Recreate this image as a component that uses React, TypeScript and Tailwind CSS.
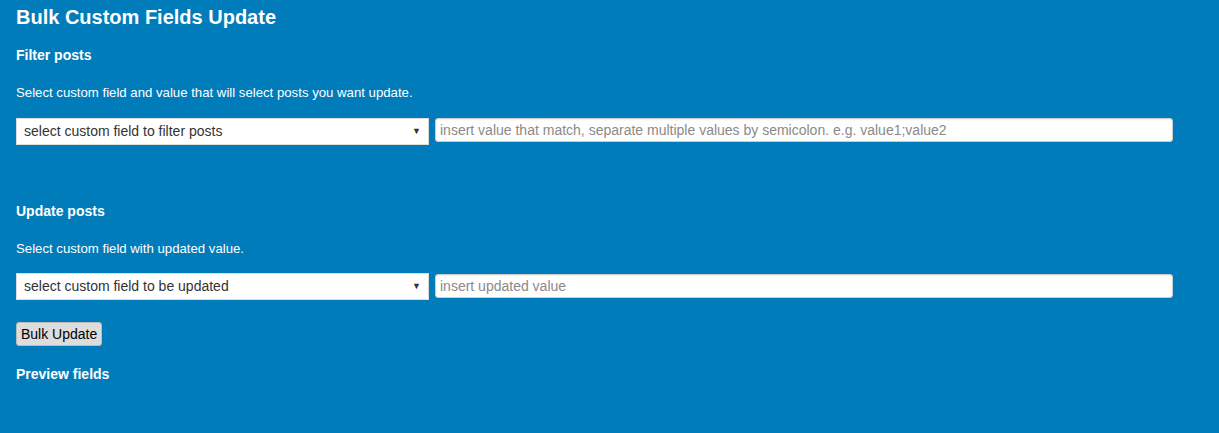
import React from "react"

function FieldSelect({ label }: { label: string }) {
  return (
    <div className="relative w-[413px] h-[27px] shrink-0">
      <select
        defaultValue=""
        className="appearance-none w-full h-full bg-white border border-[#dddddd] text-[#333333] text-[14px] pl-[7px] pr-6 outline-none"
      >
        <option value="">{label}</option>
      </select>
      <span className="pointer-events-none absolute right-[8px] top-[7px] text-[9px] leading-[12px] text-[#333333]">▼</span>
    </div>
  )
}

function ValueInput({ placeholder }: { placeholder: string }) {
  return (
    <input
      placeholder={placeholder}
      className="w-[738px] h-[24px] bg-white border border-[#cccccc] rounded-[3px] px-[4px] text-[14px] text-[#333333] placeholder-[#8a8a8a] outline-none shadow-[inset_0_1px_2px_rgba(0,0,0,0.07)]"
    />
  )
}

export default function App() {
  return (
    <div
      className="min-h-[433px] bg-[#007cba] text-white px-[16px] pb-10"
      style={{ fontFamily: '"Liberation Sans", Arial, sans-serif' }}
    >
      <h1 className="pt-[5px] text-[20px] leading-[24px] font-bold">Bulk Custom Fields Update</h1>

      {/* Filter */}
      <h2 className="mt-[18px] text-[14px] leading-[16px] font-bold">Filter posts</h2>
      <p className="mt-[22px] text-[13.2px] leading-[16px]">Select custom field and value that will select posts you want update.</p>
      <div className="mt-[17px] flex items-start gap-[6px]">
        <FieldSelect label="select custom field to filter posts" />
        <ValueInput placeholder="insert value that match, separate multiple values by semicolon. e.g. value1;value2" />
      </div>

      {/* Update */}
      <h2 className="mt-[58px] text-[14px] leading-[16px] font-bold">Update posts</h2>
      <p className="mt-[22px] text-[13.2px] leading-[16px]">Select custom field with updated value.</p>
      <div className="mt-[16px] flex items-start gap-[6px]">
        <FieldSelect label="select custom field to be updated" />
        <div className="pt-px">
          <ValueInput placeholder="insert updated value" />
        </div>
      </div>

      <button className="mt-[22px] h-[24px] px-[4px] bg-[#dddddd] border border-[#bbbbbb] rounded-[3px] text-[14px] text-black block">
        Bulk Update
      </button>

      <h2 className="mt-[20px] text-[14px] leading-[16px] font-bold">Preview fields</h2>
    </div>
  )
}
